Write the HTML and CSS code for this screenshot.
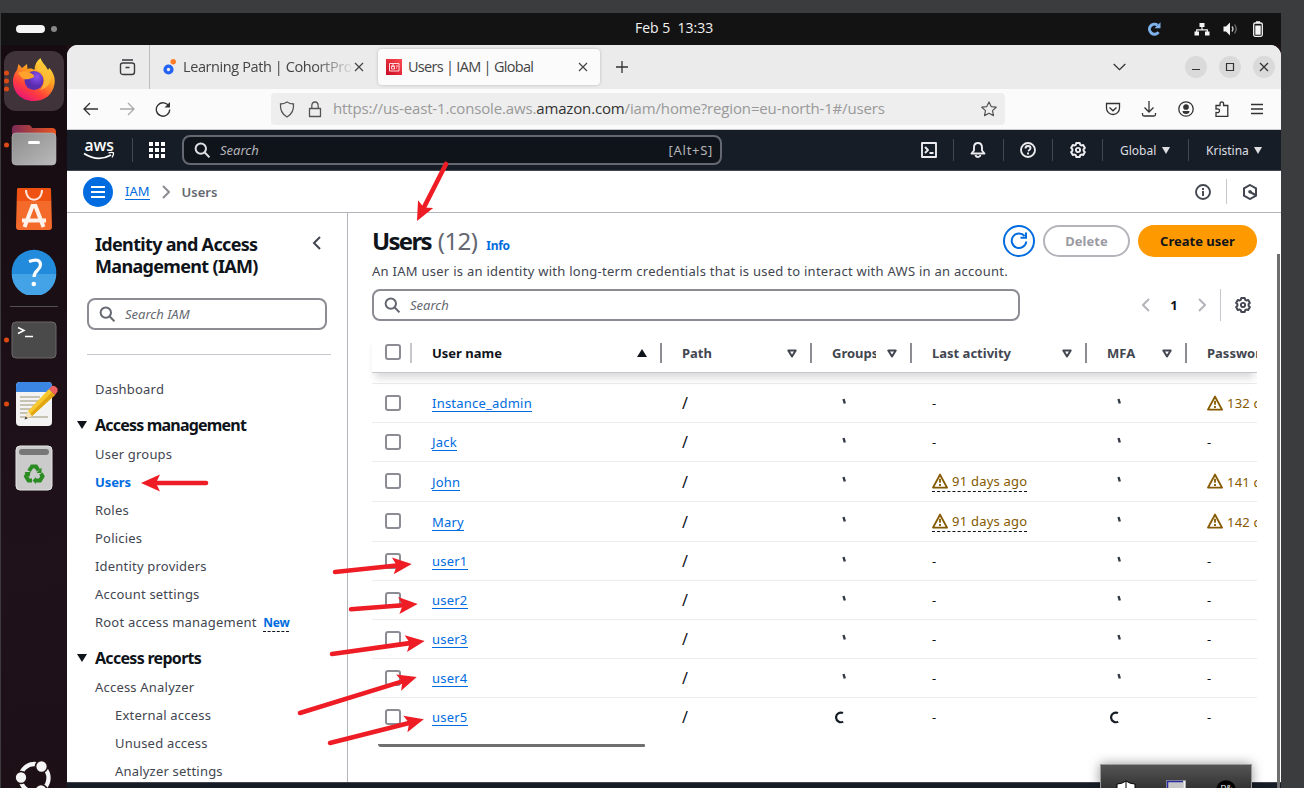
FILE: index.html
```
<!DOCTYPE html>
<html lang="en">
<head>
<meta charset="utf-8">
<title>Users | IAM | Global</title>
<link rel="stylesheet" href="styles.css">
</head>
<body>
<svg class="defs" width="0" height="0">
  <defs>
    <symbol id="search" viewBox="0 0 16 16"><circle cx="6.800" cy="6.600" r="5.200" fill="none" stroke="currentColor" stroke-width="2"/><path d="M10.500 10.300l5 5" stroke="currentColor" stroke-width="2"/></symbol>
    <symbol id="gear" viewBox="0 0 16 16"><path d="M6.300 1h3.400l.5 1.800 1.200.7 1.800-.5 1.700 2.900-1.300 1.300v1.600l1.300 1.300-1.700 2.900-1.800-.5-1.200.7-.5 1.800H6.300l-.5-1.800-1.200-.7-1.800.5-1.700-2.900 1.300-1.300V7.200L1.100 5.900 2.800 3l1.800.5 1.200-.7z" fill="none" stroke="currentColor" stroke-width="2" stroke-linejoin="round"/><circle cx="8" cy="8" r="2.100" fill="none" stroke="currentColor" stroke-width="1.900"/></symbol>
    <symbol id="warn" viewBox="0 0 16 16"><path d="M8 1.600L15 14.600H1z" fill="none" stroke="currentColor" stroke-width="1.900" stroke-linejoin="round"/><path d="M8 5.800v4M8 11v2" stroke="currentColor" stroke-width="1.800"/></symbol>
    <symbol id="sort" viewBox="0 0 10 9"><path d="M1.300 1.500h7.400L5 7.500z" fill="none" stroke="currentColor" stroke-width="2" stroke-linejoin="round"/></symbol>
    <symbol id="tick" viewBox="0 0 16 16"><path d="M8.500 4l1.300 4.500" stroke="#333a44" stroke-width="2.400"/></symbol>
    <symbol id="ring" viewBox="0 0 16 16"><path d="M8 4.100A4.800 4.800 0 1 0 8.200 12.600" fill="none" stroke="#161d26" stroke-width="2.200"/></symbol>
    <symbol id="reload" viewBox="0 0 16 16"><path d="M14 5.500A6.700 6.700 0 1 0 14.700 8.500" fill="none" stroke="currentColor" stroke-width="1.300"/><path d="M15 1v5.500H9.500z" fill="currentColor"/></symbol>
    <symbol id="reload2" viewBox="0 0 18 18"><path d="M14.600 4A7.300 7.300 0 1 0 16.300 9.500" fill="none" stroke="currentColor" stroke-width="2"/><path d="M16 .5v5.200h-5.500" fill="none" stroke="currentColor" stroke-width="2"/></symbol>
  </defs>
</svg>
<div class="desktop">
  <header class="topbar">
    <span class="spaces"><i></i><b></b></span>
    <span class="clock">Feb 5&nbsp; 13:33</span>
    <span class="tray">
      <svg width="14" height="14" viewBox="0 0 14 14"><path d="M11.500 10.200A5 5 0 1 1 10.500 3.200" fill="none" stroke="#7fb2ea" stroke-width="3"/><path d="M13.500.3v6H7.500z" fill="#7fb2ea"/></svg>
      <svg class="net" width="16" height="14" viewBox="0 0 16 14"><path d="M5.500 1h5v4h-5zM.5 9.500h4.500v4H.5zM11 9.500h4.500v4H11z" fill="#f4f4f4"/><path d="M8 5v3M2.700 10V7.800h10.600V10" fill="none" stroke="#f4f4f4" stroke-width="1.200"/></svg>
      <svg class="vol" width="15" height="14" viewBox="0 0 15 14"><path d="M.5 4.500H3L7 .5v13L3 9.500H.5z" fill="#f4f4f4"/><path d="M9 4.500q2 2.500 0 5" fill="none" stroke="#ccc" stroke-width="1.300"/><path d="M11.500 2.500q3.400 4.500 0 9" fill="none" stroke="#777" stroke-width="1.200"/></svg>
      <svg class="bat" width="10" height="16" viewBox="0 0 10 16"><rect x=".7" y="2" width="8.600" height="13.300" rx="1.500" fill="none" stroke="#f4f4f4" stroke-width="1.300"/><path d="M3 .3h4v2H3zM2.300 4.500h5.400v9.300H2.300z" fill="#f4f4f4"/></svg>
    </span>
  </header>
  <div class="workspace">
    <nav class="dock">
      <div class="app active"><span class="dots"><i></i><i></i><i></i></span>
        <svg width="44" height="46" viewBox="0 0 44 46">
          <defs><linearGradient id="fx" x1=".85" y1="0" x2=".25" y2="1"><stop offset="0" stop-color="#fff04a"/><stop offset=".4" stop-color="#ffa01f"/><stop offset=".72" stop-color="#ff3f3c"/><stop offset="1" stop-color="#e8127c"/></linearGradient><radialGradient id="globe" cx=".65" cy=".3"><stop offset="0" stop-color="#8a52ef"/><stop offset="1" stop-color="#5a2cae"/></radialGradient></defs>
          <path d="M28.500 1c1 4 5 7 7.500 12l1.500-2c4 5 6 10 5 16-2 11-10 17-21 17C9 44 1 35 1 24c0-4 1-7 4-11l1.500-6 3.500 4 5-4 .5 5c4-1 5 0 7 1 0-5 2-9 6-12z" fill="url(#fx)"/>
          <circle cx="22" cy="23.500" r="9.500" fill="url(#globe)"/>
          <path d="M6 16c5-3 11-2 15 1.500 2 1 1 3-1 3.500-4 1-6 2.500-10 0z" fill="#ffa32c"/>
          <path d="M24 13c9 2 11 13 4 20 9-2 13-10 9-18L29 4z" fill="#ffc13a" opacity=".75"/>
        </svg></div>
      <div class="app files"><span class="dots"><i></i></span>
        <svg width="46" height="42" viewBox="0 0 46 42"><defs><linearGradient id="fo"><stop offset="0" stop-color="#7d2c57"/><stop offset="1" stop-color="#e8541f"/></linearGradient><linearGradient id="fg" x2="1" y2="1"><stop offset="0" stop-color="#8c8c8c"/><stop offset="1" stop-color="#bababa"/></linearGradient></defs><path d="M1 5q0-4 4-4h13q2 0 3 3h20q4 0 4 4v12H1z" fill="url(#fo)"/><rect x="1" y="9" width="44" height="32" rx="4" fill="url(#fg)" stroke="#b5b5b5" stroke-width=".6"/><rect x="17" y="17" width="12" height="3" rx="1.500" fill="#fff"/></svg></div>
      <div class="app store"><svg width="38" height="44" viewBox="0 0 38 44"><path d="M4 1h30q2 0 2 2l1 37q0 3-3 3H4q-3 0-3-3L2 3q0-2 2-2z" fill="#f36a2b"/><path d="M4 1h30q2 0 2 2v11H2V3q0-2 2-2z" fill="#ee5112"/><path d="M11 3c0 13 16 13 16 0" fill="none" stroke="#ffe6da" stroke-width="2"/><path d="M9.500 40L17.500 19h3L28.500 40M7 33.500h24" fill="none" stroke="#fff2ea" stroke-width="4"/></svg></div>
      <div class="app help"><svg width="46" height="46" viewBox="0 0 46 46"><circle cx="23" cy="23" r="22.300" fill="#228bdc"/><path d="M.7 25a22.300 22.300 0 0 0 44.600 0z" fill="#43a3e6"/><path d="M18 12.500q11-4 11.500 3c0 6-6.500 6-6.500 12.500" fill="none" stroke="#fff" stroke-width="3.200"/><circle cx="22.800" cy="35" r="2.300" fill="#fff"/></svg></div>
      <hr>
      <div class="app term"><span class="dots"><i></i></span><svg width="46" height="38" viewBox="0 0 46 38"><rect x="1" y="1" width="44" height="36" rx="4" fill="#4a4a4a" stroke="#696969"/><path d="M7 6.500l6 3-6 3M14 15.500h8" fill="none" stroke="#fff" stroke-width="1.500"/></svg></div>
      <div class="app edit"><span class="dots"><i></i></span><svg width="48" height="48" viewBox="-1 0 48 48"><rect x="5" y="2" width="36" height="44" rx="4" fill="#f3f3f3"/><path d="M5 12V6q0-4 4-4h28q4 0 4 4v6z" fill="#3b86e3"/><path d="M9 17h20M9 21h18M9 25h15M9 29h13M9 33h12M9 37h28" stroke="#c7c2b2" stroke-width="1.800"/><path d="M14 39l3-8L38 9l6 6-23 21z" fill="#f7c92d"/><path d="M19 34L41 12l3 3-23 21z" fill="#e2a612"/><path d="M38 9l3-3q3-1 5.500 2.500v3L44 15z" fill="#f06262"/><path d="M14 39l3-8 4 5z" fill="#f7e3bc"/><path d="M13.500 39.500l1.300-3 2 1.700z" fill="#333"/></svg></div>
      <div class="app trash"><svg width="38" height="46" viewBox="0 0 38 46"><rect x="1" y="1" width="36" height="44" rx="4" fill="#cbcbcb" stroke="#e4e4e4"/><rect x="4" y="4" width="30" height="6" rx="3" fill="#777"/><g fill="none" stroke="#2a8c22" stroke-width="4"><path d="M14 26l3-4.500h4l2.500 4"/><path d="M26 28.500l1.500 3-2.500 4h-4"/><path d="M17 35.500h-3.500L11 31.500l1.500-3"/></g><path d="M26.500 22.500v5.500h-5zM21 32v7l-3.500-3.500zM9.500 27h6l-1 5z" fill="#2a8c22"/></svg></div>
      <div class="ubuntu"><svg width="38" height="38" viewBox="0 0 38 38"><circle cx="19.500" cy="19" r="14" fill="none" stroke="#f5f5f5" stroke-width="4.300"/><g fill="#f5f5f5" stroke="#211218" stroke-width="1.700"><circle cx="6" cy="18.500" r="6"/><circle cx="26.500" cy="7.500" r="6"/><circle cx="26" cy="31.500" r="6"/></g></svg></div>
    </nav>
    <main class="window">
      <div class="tabs">
        <svg class="archive" width="17" height="17" viewBox="0 0 17 17" fill="none" stroke="#3a3a3e" stroke-width="1.400"><path d="M3 1h11M4 4h9q2.500 0 2.500 2v7q0 2.500-2.500 2.500H4q-2.500 0-2.500-2.500V6q0-2 2.500-2zM6.500 8.500h4"/></svg>
        <div class="tab first">
          <svg width="14" height="16" viewBox="0 0 14 16"><circle cx="5.500" cy="10.500" r="3.400" fill="none" stroke="#2563f5" stroke-width="3.400"/><circle cx="10.200" cy="2.800" r="2.700" fill="#ff7b24"/></svg>
          <span class="ttl fade">Learning Path | CohortPro</span><svg class="x" width="10" height="10" viewBox="0 0 10 10"><path d="M1 1l8 8M9 1L1 9" stroke="#444" stroke-width="1.200"/></svg>
        </div>
        <div class="tab current">
          <svg width="16" height="16" viewBox="0 0 16 16"><defs><linearGradient id="ia" x1="0" y1="1" x2="1" y2="0"><stop offset="0" stop-color="#c80b25"/><stop offset="1" stop-color="#ff4c51"/></linearGradient></defs><path d="M0 0h16v16H0z" fill="url(#ia)"/><path d="M3.500 4.500h9.500v7.500H3.500zM5.500 7.500h3v2.500h-3zM6 7.500V6h2v1.500M10 7h2M10 9h1" fill="none" stroke="#ffd9dc"/></svg>
          <span class="ttl">Users | IAM | Global</span><svg class="x" width="10" height="10" viewBox="0 0 10 10"><path d="M1 1l8 8M9 1L1 9" stroke="#444" stroke-width="1.200"/></svg>
        </div>
        <svg class="plus" width="12" height="12" viewBox="0 0 12 12"><path d="M6 0v12M0 6h12" stroke="#333" stroke-width="1.300"/></svg>
        <svg class="down" width="13" height="8" viewBox="0 0 13 8"><path d="M.7 1l5.800 5.600L12.300 1" fill="none" stroke="#333" stroke-width="1.300"/></svg>
        <span class="wbtn"><svg width="10" height="10"><path d="M1 7.500h8" stroke="#333" stroke-width="1.200"/></svg></span>
        <span class="wbtn"><svg width="10" height="10"><path d="M1.500 1.500h7v7h-7z" fill="none" stroke="#333" stroke-width="1.200"/></svg></span>
        <span class="wbtn"><svg width="10" height="10"><path d="M1 1l8 8M9 1L1 9" stroke="#333" stroke-width="1.300"/></svg></span>
      </div>
      <div class="toolbar">
        <svg class="back" width="16" height="14" viewBox="0 0 16 14" fill="none" stroke="#333" stroke-width="1.300"><path d="M15 7H1.500M7 1L1 7l6 6"/></svg>
        <svg class="fwd" width="16" height="14" viewBox="0 0 16 14" fill="none" stroke="#aaa" stroke-width="1.300"><path d="M1 7h13.500M9 1l6 6-6 6"/></svg>
        <svg class="rel" width="16" height="16"><use href="#reload"/></svg>
        <div class="url">
          <svg width="16" height="17" viewBox="0 0 16 17"><path d="M8 1q3 2 6.500 2C15 9 12.500 13.500 8 16 3.500 13.500 1 9 1.500 3 5 3 8 1 8 1z" fill="none" stroke="#555" stroke-width="1.300"/></svg>
          <svg width="14" height="17" viewBox="0 0 14 17"><path d="M1.500 7.500h11v8h-11zM3.800 7.500V5q0-4 3.200-4t3.200 4v2.500" fill="none" stroke="#555" stroke-width="1.300" stroke-linejoin="round"/></svg>
          <span class="addr">https://us-east-1.console.aws.<b>amazon.com</b>/iam/home?region=eu-north-1#/users</span>
          <svg class="star" width="16" height="16" viewBox="0 0 16 16"><path d="M8 1l2.200 4.600 5 .6-3.700 3.400 1 5L8 12.200 3.500 14.600l1-5L.8 6.200l5-.6z" fill="none" stroke="#555" stroke-width="1.200" stroke-linejoin="round"/></svg>
        </div>
        <div class="tbr">
          <svg width="16" height="16" viewBox="0 0 16 16"><path d="M1.500 2.500h13V7a6.500 6.500 0 0 1-13 0zM4.500 6.500L8 9.800l3.500-3.300"/></svg>
          <svg width="16" height="16" viewBox="0 0 16 16"><path d="M8 0v11M3.500 6.500L8 11l4.500-4.500M1.500 12v1.500q0 1.500 1.500 1.500h10q1.500 0 1.500-1.500V12"/></svg>
          <svg width="16" height="16" viewBox="0 0 16 16"><circle cx="8" cy="8" r="7.200"/><circle cx="8" cy="6" r="2.200" fill="#333"/><path d="M4.500 10h7q0 3-3.500 3t-3.500-3z" fill="#333" stroke="none"/></svg>
          <svg width="16" height="16" viewBox="0 0 16 16"><path d="M2 15.300V11.500q3.500.5 3.500-1.800T2 8V4.500h4V3q0-2.200 1.800-2.200T9.600 3v1.500h4.200v10.800z"/></svg>
          <svg width="14" height="16" viewBox="0 0 14 16"><path d="M1 3.500h12M1 8h12M1 12.500h12"/></svg>
        </div>
      </div>
      <div class="aws">
        <svg class="swoosh" width="34" height="24" viewBox="0 0 34 24"><text x="1.500" y="12.500" textLength="29.500" lengthAdjust="spacingAndGlyphs" class="logo">aws</text><path d="M1 15.500q14 9 27 1.500" fill="none" stroke="#fff" stroke-width="1.700"/><path d="M25.500 14.800q4-.8 5 0 .4 1.700-1.500 4.700" fill="none" stroke="#fff" stroke-width="1.300"/></svg>
        <i class="sep big"></i>
        <svg class="apps" width="16" height="16" viewBox="0 0 16 16" fill="#fff"><path d="M0 0h4v4H0zM6 0h4v4H6zM12 0h4v4h-4zM0 6h4v4H0zM6 6h4v4H6zM12 6h4v4h-4zM0 12h4v4H0zM6 12h4v4H6zM12 12h4v4h-4z"/></svg>
        <div class="field awsfield"><svg width="16" height="16"><use href="#search"/></svg><em>Search</em><span>[Alt+S]</span></div>
        <svg class="ai shell" width="16" height="16" viewBox="0 0 16 16"><path d="M1 1h14v14H1zM4 5l3 3-3 3M8.500 11h4"/></svg><i class="sep"></i>
        <svg class="ai" width="16" height="16" viewBox="0 0 16 16"><path d="M1.500 11.500L4 8.500V5.500q0-4.500 4-4.500t4 4.500v3l2.500 3zM5.500 13q.5 2 2.500 2t2.500-2"/></svg><i class="sep s2"></i>
        <svg class="ai" width="16" height="16" viewBox="0 0 16 16"><circle cx="8" cy="8" r="7"/><path d="M5.500 6.500q0-2.500 2.500-2.500t2.500 2.200Q10.500 7.500 8 9M8 10.500v2"/></svg><i class="sep"></i>
        <svg class="ai gearw" width="16" height="16"><use href="#gear"/></svg><i class="sep"></i>
        <span class="menu m1">Global</span><span class="tri"></span><i class="sep"></i><span class="menu m2">Kristina</span><span class="tri"></span>
      </div>
      <div class="crumbs">
        <span class="burger"><svg width="14" height="12"><path d="M0 1h14M0 6h14M0 11h14" stroke="#fff" stroke-width="2"/></svg></span>
        <a class="link iam">IAM</a>
        <svg class="chev" width="8" height="14" viewBox="0 0 8 14"><path d="M1 1l6 6-6 6" fill="none" stroke="#8c8c94" stroke-width="2"/></svg>
        <span class="here">Users</span>
        <svg class="info" width="16" height="16" viewBox="0 0 16 16" fill="none" stroke="#424650" stroke-width="1.900"><circle cx="8" cy="8" r="7"/><path d="M8 7v5M8 4v2"/></svg>
        <i class="csep"></i>
        <svg class="hex" width="16" height="16" viewBox="0 0 16 16" fill="none" stroke="#424650" stroke-width="2"><path d="M8 1l6 3.400v7.200L8 15l-6-3.400V4.400z"/><circle cx="8" cy="7.800" r="1.800" fill="#424650" stroke="none"/><path d="M8 8l5.500 3"/></svg>
      </div>
      <div class="content">
        <aside class="side">
          <div class="shead"><h2>Identity and Access<br>Management (IAM)</h2><svg width="9" height="14" viewBox="0 0 9 14"><path d="M8 1L2 7l6 6" fill="none" stroke="#424650" stroke-width="2"/></svg></div>
          <div class="field sfield"><svg width="16" height="16"><use href="#search"/></svg><em>Search IAM</em></div>
          <hr>
          <p class="dash">Dashboard</p>
          <h3><span class="tri"></span>Access management</h3>
          <ul><li>User groups</li><li class="on">Users</li><li>Roles</li><li>Policies</li><li>Identity providers</li><li>Account settings</li><li>Root access management <span class="new">New</span></li></ul>
          <h3><span class="tri"></span>Access reports</h3>
          <ul><li>Access Analyzer</li><li class="sub">External access</li><li class="sub">Unused access</li><li class="sub">Analyzer settings</li></ul>
        </aside>
        <section class="main">
          <div class="head"><h1>Users</h1><span class="count">(12)</span><a class="inf">Info</a>
            <span class="round"><svg width="18" height="18"><use href="#reload2"/></svg></span><span class="btn del">Delete</span><span class="btn create">Create user</span></div>
          <p class="desc">An IAM user is an identity with long-term credentials that is used to interact with AWS in an account.</p>
          <div class="filter"><div class="field ffield"><svg width="16" height="16"><use href="#search"/></svg><em>Search</em></div>
            <svg class="pl" width="8" height="14" viewBox="0 0 8 14"><path d="M7 1L1 7l6 6" fill="none" stroke="#b4b4bb" stroke-width="2"/></svg><b class="page">1</b><svg class="pr" width="8" height="14" viewBox="0 0 8 14"><path d="M1 1l6 6-6 6" fill="none" stroke="#b4b4bb" stroke-width="2"/></svg><i class="fsep"></i><svg class="fgear" width="16" height="16"><use href="#gear"/></svg></div>
          <div class="thead">
            <div class="c0"><i class="cb"></i></div><div class="dark">User name<svg width="10" height="9"><path d="M5 0l5 8H0z" fill="#0f141a"/></svg></div><div>Path<svg width="10" height="9"><use href="#sort"/></svg></div><div><span class="clip">Groups</span><svg width="10" height="9"><use href="#sort"/></svg></div><div>Last activity<svg width="10" height="9"><use href="#sort"/></svg></div><div>MFA<svg width="10" height="9"><use href="#sort"/></svg></div><div class="lastc">Password age</div>
          </div>
          <div class="rows">
            <div class="row"><i class="cb"></i><a class="link">Instance_admin</a><span class="sl">/</span><svg class="sp"><use href="#tick"/></svg><span>-</span><svg class="sp"><use href="#tick"/></svg><span class="w"><svg><use href="#warn"/></svg>132 days</span></div>
            <div class="row"><i class="cb"></i><a class="link">Jack</a><span class="sl">/</span><svg class="sp"><use href="#tick"/></svg><span>-</span><svg class="sp"><use href="#tick"/></svg><span>-</span></div>
            <div class="row tall"><i class="cb"></i><a class="link">John</a><span class="sl">/</span><svg class="sp"><use href="#tick"/></svg><span class="w dot"><svg><use href="#warn"/></svg>91 days ago</span><svg class="sp"><use href="#tick"/></svg><span class="w"><svg><use href="#warn"/></svg>141 days</span></div>
            <div class="row tall"><i class="cb"></i><a class="link">Mary</a><span class="sl">/</span><svg class="sp"><use href="#tick"/></svg><span class="w dot"><svg><use href="#warn"/></svg>91 days ago</span><svg class="sp"><use href="#tick"/></svg><span class="w"><svg><use href="#warn"/></svg>142 days</span></div>
            <div class="row"><i class="cb"></i><a class="link">user1</a><span class="sl">/</span><svg class="sp"><use href="#tick"/></svg><span>-</span><svg class="sp"><use href="#tick"/></svg><span>-</span></div>
            <div class="row"><i class="cb"></i><a class="link">user2</a><span class="sl">/</span><svg class="sp"><use href="#tick"/></svg><span>-</span><svg class="sp"><use href="#tick"/></svg><span>-</span></div>
            <div class="row"><i class="cb"></i><a class="link">user3</a><span class="sl">/</span><svg class="sp"><use href="#tick"/></svg><span>-</span><svg class="sp"><use href="#tick"/></svg><span>-</span></div>
            <div class="row"><i class="cb"></i><a class="link">user4</a><span class="sl">/</span><svg class="sp"><use href="#tick"/></svg><span>-</span><svg class="sp"><use href="#tick"/></svg><span>-</span></div>
            <div class="row"><i class="cb"></i><a class="link">user5</a><span class="sl">/</span><svg class="sp"><use href="#ring"/></svg><span>-</span><svg class="sp"><use href="#ring"/></svg><span>-</span></div>
          </div>
          <div class="hscroll"></div>
        </section>
        <i class="vscroll"></i>
      </div>
      <footer class="foot"></footer>
    </main>
  </div>
</div>
<div class="popup">
  <svg width="20" height="12" viewBox="0 0 20 12"><path d="M1 12V4q5 0 9-3 4 3 9 3v8z" fill="#fff" stroke="#000"/><path d="M10 1v11" stroke="#000"/></svg>
  <svg width="20" height="12" viewBox="0 0 20 12"><path d="M.5.5h19V12H.5z" fill="#c6c6c6" stroke="#999"/><path d="M1.500 12V1.500H17" fill="none" stroke="#2929a3" stroke-width="1.500"/><path d="M18.500 1v11" stroke="#eee" stroke-width="1.500"/></svg>
  <svg width="20" height="12" viewBox="0 0 20 12"><circle cx="10" cy="10" r="9.800" fill="#000"/><text x="4.500" y="9.500" class="badge">D&amp;</text></svg>
</div>
<svg class="arrows" width="1304" height="788">
  <defs><marker id="head" markerUnits="userSpaceOnUse" markerWidth="30" markerHeight="30" overflow="visible" orient="auto"><path d="M-4-8.500L15 0-4 8.500 0 0z" fill="#ee1c24"/></marker></defs>
  <g fill="none" stroke="#ee1c24" stroke-width="4.600" stroke-linecap="round">
    <path d="M446 164L423.800 207.600" marker-end="url(#head)"/><path d="M206 483L156 483" marker-end="url(#head)"/><path d="M335 572L396.800 565.500" marker-end="url(#head)"/><path d="M351 609.300L402.700 605.200" marker-end="url(#head)"/><path d="M332 654L409.800 643.100" marker-end="url(#head)"/><path d="M300 713L402.400 681.400" marker-end="url(#head)"/><path d="M330 743L409.200 723" marker-end="url(#head)"/>
  </g>
</svg>
</body>
</html>
```

FILE: styles.css
```
* { box-sizing: border-box; }
body { margin: 0; width: 1304px; height: 788px; overflow: hidden; background: #3b3c3e; font: 13px/20px "Noto Sans", "Open Sans", sans-serif; color: #424650; padding: 13px 0 0 1px; }
svg { flex: none; display: block; }
i { font-style: normal; }
h1, h2, h3, p, ul { margin: 0; padding: 0; list-style: none; }
.defs { position: absolute; }
.desktop { width: 1280px; height: 775px; display: flex; flex-direction: column; background: #1d1016; overflow: hidden; }
.topbar { height: 32px; flex: none; background: #131313; display: grid; grid-template-columns: 1fr auto 1fr; align-items: center; color: #f2f2f2; }
.spaces { display: flex; align-items: center; gap: 6px; padding-left: 15px; }
.spaces i { width: 29px; height: 8px; border-radius: 4px; background: #f5f5f5; }
.spaces b { width: 6px; height: 6px; border-radius: 50%; background: #888; }
.clock { font-family: "Open Sans", sans-serif; font-size: 14px; width: 78px; white-space: nowrap; margin: 0 0 2px 66px; }
.tray { display: flex; align-items: center; justify-content: flex-end; padding-right: 18px; }
.net { margin-left: 33px; } .vol { margin-left: 13px; } .bat { margin-left: 15px; }
.workspace { display: flex; flex: 1; min-height: 0; }
.dock { width: 66px; flex: none; display: flex; flex-direction: column; align-items: center; padding-top: 6px; background: linear-gradient(170deg, #160b11, #20121a 70%, #1d0f16); overflow: hidden; }
.app { position: relative; flex: none; width: 60px; height: 60px; display: flex; align-items: center; justify-content: center; border-radius: 12px; }
.active { background: #40333a; }
.active svg { margin-top: -2px; }
.dots { position: absolute; left: 0; top: 50%; transform: translateY(-50%); display: flex; flex-direction: column; gap: 3px; }
.dots i { width: 5px; height: 5px; border-radius: 50%; background: #dc4a14; }
.files { margin-top: 4px; } .store { margin-top: 4px; } .help { margin-top: 3px; }
.dock hr { width: 48px; border: 0; height: 1px; background: #505050; margin: 4px 0 0; flex: none; }
.term { margin-top: 3px; } .edit { margin-top: 4px; } .trash { margin-top: 4px; }
.ubuntu { margin-top: 261px; flex: none; }
.window { width: 1214px; display: flex; flex-direction: column; background: #fff; border-radius: 11px 11px 0 0; overflow: hidden; }
.tabs { height: 44px; flex: none; background: #ebebeb; display: flex; align-items: center; font-family: "Open Sans", sans-serif; font-size: 14.5px; letter-spacing: -.7px; color: #444; }
.archive { margin: 0 13px 0 52px; }
.tab { display: flex; align-items: center; flex: none; }
.ttl { white-space: nowrap; overflow: hidden; }
.first { width: 229px; height: 44px; border-left: 1px solid #bdbdbd; padding: 0 13px; }
.first .ttl { margin-left: 6px; width: 168px; letter-spacing: -.4px; }
.fade { -webkit-mask-image: linear-gradient(90deg, #000 78%, transparent 102%); mask-image: linear-gradient(90deg, #000 78%, transparent 102%); }
.first .x { margin-left: 3px; }
.current { width: 222px; height: 36px; background: #fbfbfb; border-radius: 4px; box-shadow: 0 0 3px #8888; padding: 0 12px 0 8px; }
.current .ttl { margin-left: 6px; flex: 1; }
.plus { margin-left: 16px; } .down { margin-left: 485px; margin-right: 59px; }
.wbtn { width: 22px; height: 22px; border-radius: 50%; background: #dadada; display: flex; align-items: center; justify-content: center; margin-right: 12px; flex: none; }
.wbtn:last-child { margin-right: 0; }
.toolbar { height: 41px; flex: none; background: #fbfbfb; border-bottom: 1px solid #ccc; display: flex; align-items: center; }
.back { margin-left: 16px; } .fwd { margin-left: 20px; } .rel { margin-left: 20px; margin-right: 100px; color: #333; }
.url { width: 734px; height: 32px; background: #eee; border-radius: 4px; display: flex; align-items: center; padding-left: 8px; font-family: "Open Sans", sans-serif; font-size: 15px; color: #999; }
.url svg + svg { margin-left: 13px; }
.addr { margin-left: 11px; width: 643px; white-space: nowrap; letter-spacing: -.15px; margin-top: -2px; }
.addr b { font-weight: 400; color: #333; }
.star { margin-left: 5px; }
.tbr { display: flex; margin-left: 100px; gap: 20.3px; fill: none; stroke: #333; stroke-width: 1.3; }
.aws { height: 41px; flex: none; background: #161d26; border-bottom: 1px solid #424650; display: flex; align-items: center; color: #dedee3; }
.swoosh { margin-left: 16px; overflow: visible; }
.logo { font: 600 17px "Open Sans", sans-serif; fill: #fff; }
.sep { width: 1px; height: 22px; background: #424650; flex: none; }
.big { height: 24px; margin-left: 15px; margin-right: 16px; }
.field { display: flex; align-items: center; height: 32px; border: 2px solid #8c8c94; border-radius: 8px; color: #656871; padding: 0 10px; background: #fff; }
.field em { margin-left: 10px; flex: 1; }
.awsfield { width: 540px; height: 30px; margin-left: 17px; background: #0f141a; border-color: #656871; color: #b4b4bb; }
.awsfield svg { color: #dedee3; } .awsfield span { margin-right: -3px; letter-spacing: .7px; }
.ai { fill: none; stroke: #ebebf0; stroke-width: 1.9; margin: 0 16px; color: #ebebf0; stroke-linejoin: round; }
.gearw { stroke: none; margin-left: 17px; }
.s2 { margin-left: 1px; }
.shell { margin-left: 199px; }
.menu { font-size: 12px; line-height: 20px; padding-top: 1px; } .m1 { margin-left: 17px; width: 38px; } .m2 { margin-left: 17px; width: 43px; }
.tri { width: 0; height: 0; border: 4.500px solid transparent; border-top: 7px solid currentColor; border-bottom: 0; margin-left: 4px; flex: none; }
.m1 + .tri { margin-right: 18px; } .m2 + .tri { margin-left: 5px; }
.crumbs { height: 42px; flex: none; border-bottom: 1px solid #b4b4bb; display: flex; align-items: center; }
.burger { width: 30px; height: 30px; margin-left: 16px; border-radius: 50%; background: #006ce0; display: flex; align-items: center; justify-content: center; }
.link { color: #006ce0; border-bottom: 1px solid #006ce0; line-height: 16px; }
.iam { margin-left: 12px; margin-right: 12px; }
.here { font-weight: 600; color: #656871; margin-left: 12px; }
.info { margin-left: auto; } .csep { width: 1px; height: 25px; background: #c6c6cd; margin: 0 15px; } .hex { margin-right: 23px; }
.content { display: flex; flex: 1; min-height: 0; position: relative; }
.side { width: 281px; border-right: 1px solid #b4b4bb; padding: 20px 16px 0 20px; overflow: hidden; flex: none; letter-spacing: .2px; }
.shead { display: flex; justify-content: space-between; padding: 0 10px 0 8px; }
.shead svg { margin-top: 3px; }
h2 { font-size: 18px; line-height: 22px; color: #0f141a; font-weight: 700; white-space: nowrap; letter-spacing: -.67px; }
.sfield { width: 240px; margin-top: 21px; letter-spacing: 0; }
.side hr { border: 0; height: 1px; background: #c6c6cd; margin: 24px 0 0; }
.dash { margin: 24px 0 0 8px; }
h3 { font-size: 16px; line-height: 20px; color: #0f141a; margin: 16px 0 0 -11px; display: flex; align-items: center; letter-spacing: -.8px; white-space: nowrap; }
h3 .tri { margin: 0 8px 0 1px; border-width: 8px 5px 0; }
.side ul { padding-left: 8px; margin-top: 5px; }
.side li { height: 28px; line-height: 28px; white-space: nowrap; }
.side ul + h3 { margin-top: 12px; letter-spacing: -.7px; }
.side .on { color: #006ce0; font-weight: 700; letter-spacing: -.1px; }
.side .sub { padding-left: 20px; }
.new { font-size: 12px; line-height: 17px; display: inline-block; font-weight: 700; color: #006ce0; border-bottom: 1px dashed #0f141a; margin-left: 3px; letter-spacing: -.2px; }
.main { width: 909px; padding: 12px 0 0 24px; flex: none; overflow: hidden; }
.head { height: 32px; display: flex; align-items: center; }
h1 { font-size: 24px; line-height: 30px; color: #0f141a; letter-spacing: -1.7px; }
.count { font-size: 24px; margin-left: 7px; color: #656871; letter-spacing: -.6px; }
.inf { font-size: 12px; font-weight: 700; color: #006ce0; margin: 10px 0 0 9px; letter-spacing: -.3px; }
.round { width: 32px; height: 32px; border-radius: 50%; border: 2px solid #006ce0; color: #006ce0; margin-left: auto; display: flex; align-items: center; justify-content: center; }
.btn { height: 32px; border-radius: 16px; margin-left: 8px; display: flex; align-items: center; justify-content: center; font-weight: 700; }
.del { width: 87px; border: 2px solid #b4b4bb; color: #9a9aa2; }
.create { width: 119px; background: #ff9900; color: #0f141a; }
.desc { margin-top: 4px; white-space: nowrap; letter-spacing: .265px; }
.filter { height: 32px; margin-top: 8px; display: flex; align-items: center; }
.ffield { width: 648px; }
.pl { margin-left: 122px; } .page { width: 40px; text-align: center; color: #0f141a; margin: 0 4px 0 4px; } .fsep { width: 1px; height: 32px; background: #c6c6cd; margin: 0 14px; } .fgear { color: #424650; }
.thead { display: grid; grid-template-columns: 40px 250px 150px 100px 175px 100px 70px; height: 40px; margin-top: 12px; border-bottom: 1px solid #c6c6cd; box-shadow: 0 8px 8px -3px #00000026; position: relative; font-weight: 700; padding-top: 10px; }
.thead > div { display: flex; justify-content: space-between; align-items: center; height: 20px; border-right: 2px solid #8c8c94; padding: 0 13px 0 20px; white-space: nowrap; }
.thead .c0 { border-color: #c6c6cd; padding-left: 13px; padding-bottom: 2px; }
.thead .lastc { border: 0; padding-right: 0; overflow: hidden; }
.dark { color: #0f141a; } .clip { width: 44px; overflow: hidden; }
.cb { width: 16px; height: 16px; border: 2px solid #8c8c94; border-radius: 3px; flex: none; background: #fff; }
.rows { padding-top: 10px; letter-spacing: .22px; }
.row { display: grid; grid-template-columns: 60px 250px 150px 100px 175px 100px 50px; height: 39px; border-top: 1px solid #ebebf0; align-items: center; color: #0f141a; justify-items: start; overflow: hidden; }
.row > .cb { margin-left: 13px; } .row .link { margin-top: 1px; }
.tall { height: 40px; }
.tall > .cb { margin-top: -2px; }
.row > .sp { width: 16px; height: 16px; margin-left: 3px; margin-top: -1px; }
.sl { font-size: 16px; }
.w { display: flex; align-items: center; gap: 4px; color: #855900; white-space: nowrap; }
.w svg { width: 16px; height: 16px; margin-top: -1px; }
.dot { border-bottom: 1px dashed #0f141a; }
.hscroll { width: 267px; height: 3px; background: #6f6f6f; margin: 8px 0 0 6px; border-radius: 0 2px 2px 6px; }
.vscroll { position: absolute; right: 1px; top: 41px; bottom: -6px; width: 3px; background: #6f6f6f; }
.foot { height: 6px; flex: none; background: #161d26; border-top: 1px solid #424650; }
.popup { position: absolute; left: 1100px; top: 764px; width: 152px; height: 24px; background: linear-gradient(#555, #333); border: 1px solid #999; border-bottom: 0; box-shadow: 0 0 12px #0006; display: flex; padding: 15px 15px 0; justify-content: space-between; overflow: hidden; }
.badge { font: 8px "Open Sans", sans-serif; fill: #fff; }
.arrows { position: absolute; left: 0; top: 0; pointer-events: none; }
```
